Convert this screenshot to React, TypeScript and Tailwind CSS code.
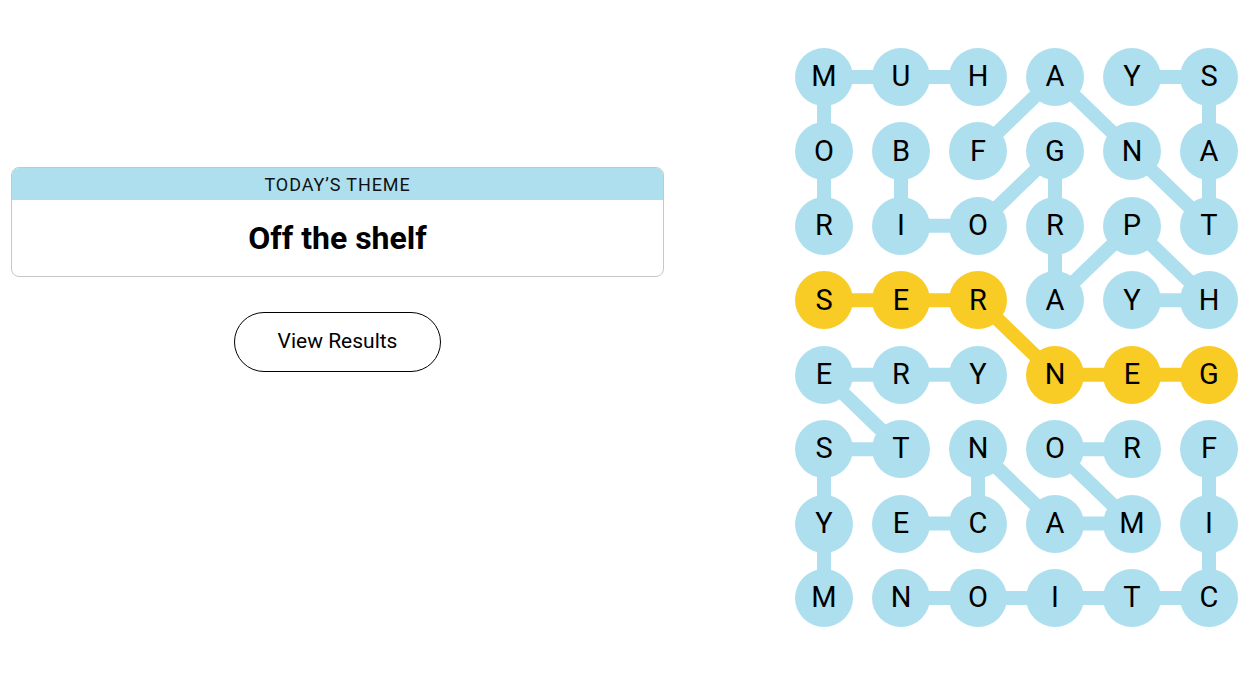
import React from "react";

type Cell = [number, number];

const COL_STEP = 77;
const ROW_STEP = 74.43;
const SIZE = 58;

const letters = [
  "MUHAYS",
  "OBFGNA",
  "RIORPT",
  "SERAYH",
  "ERYNEG",
  "STNORF",
  "YECAMI",
  "MNOITC",
];

const words: { path: Cell[]; spangram?: boolean }[] = [
  { path: [[0, 2], [0, 1], [0, 0], [1, 0], [2, 0]] },
  { path: [[1, 2], [0, 3], [1, 4], [2, 5], [1, 5], [0, 5], [0, 4]] },
  { path: [[1, 1], [2, 1], [2, 2], [1, 3], [2, 3], [3, 3], [2, 4], [3, 5], [3, 4]] },
  { path: [[4, 5], [4, 4], [4, 3], [3, 2], [3, 1], [3, 0]], spangram: true },
  { path: [[7, 0], [6, 0], [5, 0], [5, 1], [4, 0], [4, 1], [4, 2]] },
  { path: [[5, 4], [5, 3], [6, 4], [6, 3], [5, 2], [6, 2], [6, 1]] },
  { path: [[5, 5], [6, 5], [7, 5], [7, 4], [7, 3], [7, 2], [7, 1]] },
];

const spangramCells = new Set(
  words.filter((w) => w.spangram).flatMap((w) => w.path.map(([r, c]) => `${r}-${c}`)),
);

const center = ([r, c]: Cell) => ({
  x: SIZE / 2 + c * COL_STEP,
  y: SIZE / 2 + r * ROW_STEP,
});

function Board() {
  const width = SIZE + 5 * COL_STEP;
  const height = SIZE + 7 * ROW_STEP;

  return (
    <div className="relative">
      <svg
        className="absolute left-0 top-0"
        width={width}
        height={height}
        aria-hidden
      >
        {words.map((word, i) => (
          <polyline
            key={i}
            points={word.path
              .map((cell) => {
                const p = center(cell);
                return `${p.x},${p.y}`;
              })
              .join(" ")}
            fill="none"
            stroke={word.spangram ? "#f8cb25" : "#aedfee"}
            strokeWidth={14}
            strokeLinejoin="round"
          />
        ))}
      </svg>
      <div className="relative grid grid-cols-[repeat(6,58px)] gap-x-[19px] gap-y-[16.43px]">
        {letters.flatMap((row, r) =>
          row.split("").map((letter, c) => {
            const yellow = spangramCells.has(`${r}-${c}`);
            return (
              <div
                key={`${r}-${c}`}
                className={`flex h-[58px] w-[58px] items-center justify-center rounded-full text-[29px] text-black ${
                  yellow ? "bg-[#f8cb25]" : "bg-[#aedfee]"
                }`}
              >
                {letter}
              </div>
            );
          }),
        )}
      </div>
    </div>
  );
}

export default function App() {
  return (
    <div className="flex h-[688px] w-[1250px] bg-white font-['Roboto',sans-serif] text-black">
      <div className="flex w-[664px] flex-col items-center pl-[11px] pt-[167px]">
        <div className="w-[653px] overflow-hidden rounded-lg border border-[#c7c7c7]">
          <div className="flex h-[32px] items-center justify-center bg-[#aedfee] text-[18px] tracking-[0.05em] text-[#121212]">
            TODAY’S THEME
          </div>
          <div className="flex h-[76px] items-center justify-center text-[32px] font-bold">
            Off the shelf
          </div>
        </div>
        <button
          type="button"
          className="mt-[35px] flex h-[60px] w-[207px] items-center justify-center rounded-full border border-black text-[21px]"
        >
          View Results
        </button>
      </div>
      <div className="ml-[131px] pt-[48px]">
        <Board />
      </div>
    </div>
  );
}
